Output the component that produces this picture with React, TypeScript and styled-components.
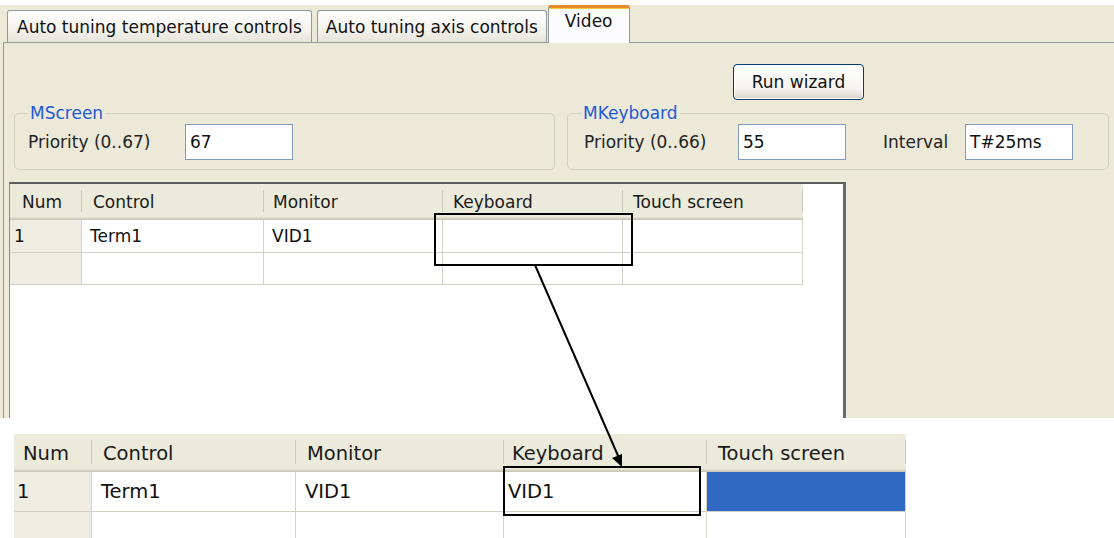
import React from "react";
import styled, { createGlobalStyle } from "styled-components";

const GlobalStyle = createGlobalStyle`
  html, body {
    margin: 0;
    padding: 0;
    background: #ffffff;
  }
  body {
    font-family: "DejaVu Sans", Tahoma, sans-serif;
    color: #000;
  }
`;

const Page = styled.div`
  position: relative;
  width: 1114px;
  height: 538px;
  overflow: hidden;
  background: #fcfcfa;
  display: flex;
  flex-direction: column;
`;

const Window = styled.div`
  flex-shrink: 0;
  height: 413px;
  margin-top: 5px;
  background: #ece9d8;
  display: flex;
  flex-direction: column;
`;

const TabStrip = styled.div`
  display: flex;
  align-items: flex-end;
  height: 37px;
  padding-left: 7px;
`;

const Tab = styled.div<{ $active?: boolean; $gap?: number; $pad: number }>`
  box-sizing: border-box;
  height: ${(p) => (p.$active ? 38 : 32)}px;
  margin-right: ${(p) => p.$gap ?? 0}px;
  margin-bottom: ${(p) => (p.$active ? -1 : 0)}px;
  padding: ${(p) => (p.$active ? 2 : 5)}px ${(p) => p.$pad}px 0;
  font-size: 17px;
  line-height: 22px;
  white-space: nowrap;
  color: #111;
  border: 1px solid #919b9c;
  border-bottom: none;
  border-radius: 3px 3px 0 0;
  position: relative;
  z-index: ${(p) => (p.$active ? 1 : 0)};
  background: ${(p) =>
    p.$active ? "#fcfcfe" : "linear-gradient(#ffffff, #f3f2ec 60%, #e6e4da)"};
  border-top: ${(p) => (p.$active ? "3px solid #e68b2c" : "1px solid #919b9c")};
  box-shadow: ${(p) => (p.$active ? "inset 0 1px 0 #ffc73c" : "none")};
`;

const Panel = styled.div`
  flex: 1;
  min-height: 0;
  margin-left: 3px;
  padding-left: 5px;
  border-top: 1px solid #919b9c;
  border-left: 1px solid #919b9c;
  display: flex;
  flex-direction: column;
`;

const ButtonRow = styled.div`
  display: flex;
  padding: 21px 0 0 724px;
`;

const WizardButton = styled.button`
  box-sizing: border-box;
  width: 131px;
  height: 36px;
  font-family: inherit;
  font-size: 17px;
  color: #111;
  border: 1px solid #003c74;
  border-radius: 4px;
  background: linear-gradient(#ffffff, #f4f3ee 70%, #d9d5c8);
  box-shadow: inset 0 0 0 1px #fff;
  padding: 0;
`;

const GroupRow = styled.div`
  display: flex;
  gap: 12px;
  padding-left: 5px;
  margin-top: 3px;
`;

const GroupBox = styled.fieldset<{ $width: number }>`
  box-sizing: border-box;
  width: ${(p) => p.$width}px;
  margin: 0;
  min-width: 0;
  padding: 0 14px 9px 13px;
  border: 1px solid #d0d0bf;
  border-radius: 5px;
`;

const GroupTitle = styled.legend`
  padding: 0 2px;
  font-size: 17px;
  line-height: 20px;
  color: #2159d6;
`;

const FieldRow = styled.div`
  display: flex;
  align-items: center;
  margin-top: 1px;
`;

const FieldLabel = styled.span<{ $width: number; $lead?: number }>`
  width: ${(p) => p.$width}px;
  margin-left: ${(p) => p.$lead ?? 0}px;
  font-size: 17px;
  color: #222;
  white-space: nowrap;
`;

const TextBox = styled.div`
  box-sizing: border-box;
  width: 108px;
  height: 36px;
  border: 1px solid #7f9db9;
  background: #fff;
  font-size: 17px;
  line-height: 34px;
  padding-left: 4px;
  color: #111;
`;

const GridFrame = styled.div`
  flex: 1;
  width: 837px;
  box-sizing: border-box;
  margin-top: 12px;
  background: #fff;
  border-top: 2px solid #5c5c5c;
  border-left: 1px solid #8c8c8c;
  border-right: 3px solid #6a6a6a;
`;

const Table = styled.div<{ $cols: number[]; $font: number }>`
  display: grid;
  grid-template-columns: ${(p) => p.$cols.map((c) => `${c}px`).join(" ")};
  font-size: ${(p) => p.$font}px;
  width: max-content;
`;

const HeadCell = styled.div<{ $height: number; $pad: number }>`
  box-sizing: border-box;
  height: ${(p) => p.$height}px;
  padding-left: ${(p) => p.$pad}px;
  display: flex;
  align-items: center;
  color: #1a1a1a;
  white-space: nowrap;
  background:
    linear-gradient(#cbc7b8, #cbc7b8) right 6px / 1px calc(100% - 14px) no-repeat,
    #ebeadb;
  box-shadow: inset 0 -1px 0 #cbc7b8, inset 0 -2px 0 #d6d2c2, inset 0 -3px 0 #e2decd;
`;

const BodyCell = styled.div<{
  $height: number;
  $pad: number;
  $rowHead?: boolean;
  $selected?: boolean;
}>`
  box-sizing: border-box;
  height: ${(p) => p.$height}px;
  padding-left: ${(p) => p.$pad}px;
  display: flex;
  align-items: center;
  white-space: nowrap;
  color: #111;
  border-right: 1px solid #d4d0c8;
  border-bottom: 1px solid #d4d0c8;
  background: ${(p) => (p.$selected ? "#316ac5" : p.$rowHead ? "#efede2" : "#ffffff")};
`;

const InsetArea = styled.div`
  flex: 1;
  min-height: 0;
  overflow: hidden;
  background: #fff;
  padding: 16px 0 0 14px;
`;

const Overlay = styled.svg`
  position: absolute;
  left: 0;
  top: 0;
  pointer-events: none;
`;

type Row = { cells: string[]; selectedCol?: number };

const HEADERS = ["Num", "Control", "Monitor", "Keyboard", "Touch screen"];

function DataTable(props: {
  cols: number[];
  font: number;
  headHeight: number;
  rowHeights: number[];
  headPads: number[];
  bodyPads: number[];
  rows: Row[];
}) {
  const { cols, font, headHeight, rowHeights, headPads, bodyPads, rows } = props;
  return (
    <Table $cols={cols} $font={font}>
      {HEADERS.map((h, i) => (
        <HeadCell key={h} $height={headHeight} $pad={headPads[i]}>
          {h}
        </HeadCell>
      ))}
      {rows.map((row, r) =>
        row.cells.map((c, i) => (
          <BodyCell
            key={`${r}-${i}`}
            $height={rowHeights[r]}
            $pad={bodyPads[i]}
            $rowHead={i === 0}
            $selected={row.selectedCol === i}
          >
            {c}
          </BodyCell>
        ))
      )}
    </Table>
  );
}

export default function App() {
  return (
    <Page>
      <GlobalStyle />
      <Window>
        <TabStrip>
          <Tab $gap={5} $pad={9}>
            Auto tuning temperature controls
          </Tab>
          <Tab $gap={1} $pad={8}>
            Auto tuning axis controls
          </Tab>
          <Tab $active $pad={16}>
            Video
          </Tab>
        </TabStrip>
        <Panel>
          <ButtonRow>
            <WizardButton>Run wizard</WizardButton>
          </ButtonRow>
          <GroupRow>
            <GroupBox $width={541}>
              <GroupTitle>MScreen</GroupTitle>
              <FieldRow>
                <FieldLabel $width={157}>Priority (0..67)</FieldLabel>
                <TextBox>67</TextBox>
              </FieldRow>
            </GroupBox>
            <GroupBox $width={542}>
              <GroupTitle>MKeyboard</GroupTitle>
              <FieldRow>
                <FieldLabel $width={154} $lead={3}>
                  Priority (0..66)
                </FieldLabel>
                <TextBox>55</TextBox>
                <FieldLabel $width={82} $lead={37}>
                  Interval
                </FieldLabel>
                <TextBox>T#25ms</TextBox>
              </FieldRow>
            </GroupBox>
          </GroupRow>
          <GridFrame>
            <DataTable
              cols={[72, 182, 179, 180, 180]}
              font={17}
              headHeight={36}
              rowHeights={[33, 32]}
              headPads={[12, 11, 9, 10, 10]}
              bodyPads={[4, 8, 8, 8, 8]}
              rows={[
                { cells: ["1", "Term1", "VID1", "", ""] },
                { cells: ["", "", "", "", ""] },
              ]}
            />
          </GridFrame>
        </Panel>
      </Window>
      <InsetArea>
        <DataTable
          cols={[78, 204, 208, 203, 199]}
          font={19.5}
          headHeight={38}
          rowHeights={[40, 40]}
          headPads={[9, 11, 11, 8, 11]}
          bodyPads={[3, 9, 9, 4, 9]}
          rows={[
            { cells: ["1", "Term1", "VID1", "VID1", ""], selectedCol: 4 },
            { cells: ["", "", "", "", ""] },
          ]}
        />
      </InsetArea>
      <Overlay width={1114} height={538} viewBox="0 0 1114 538">
        <rect x={435} y={214} width={197} height={51} fill="none" stroke="#000" strokeWidth={2} />
        <rect x={504} y={467} width={196} height={48} fill="none" stroke="#000" strokeWidth={2} />
        <line x1={535} y1={265} x2={619} y2={458} stroke="#000" strokeWidth={2} />
        <polygon points="622,467 622,454 612,458" fill="#000" />
      </Overlay>
    </Page>
  );
}
